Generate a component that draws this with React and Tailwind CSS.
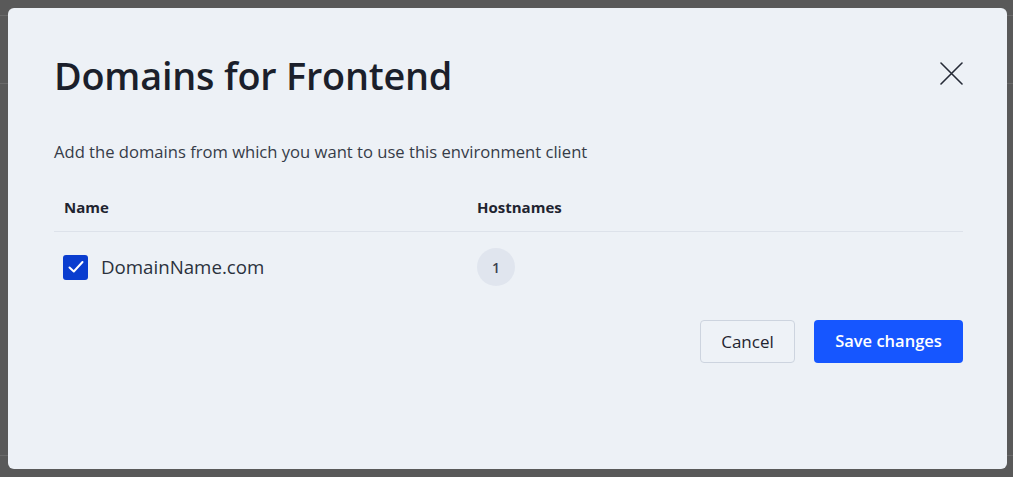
import React from 'react';

const font = { fontFamily: '"Open Sans", "Noto Sans", sans-serif' };

const CloseIcon = () => (
    <svg width="23" height="23" viewBox="0 0 23 23" fill="none" stroke="#252a36" strokeWidth="1.6" strokeLinecap="round">
        <path d="M1 1L22 22M22 1L1 22" />
    </svg>
);

const Check = () => (
    <svg width="18" height="18" viewBox="0 0 18 18" fill="none" stroke="#ffffff" strokeWidth="2" strokeLinecap="round" strokeLinejoin="round">
        <path d="M2.5 9.5L6.8 13.5L15.5 4" />
    </svg>
);

const App = () => {
    return (
        <div className="relative h-[477px] w-[1013px] overflow-hidden bg-[#595959]" style={font}>
            {/* page behind the overlay */}
            <div className="flex flex-col">
                <div className="h-[16px] border-b border-[#6a6a6a]" />
                <div className="h-[68px] border-b border-[#6a6a6a]" />
                <div className="h-[372px] border-b border-[#6a6a6a]" />
            </div>

            {/* Modal */}
            <div className="absolute inset-0 p-2">
                <div className="flex h-[461px] w-[999px] flex-col rounded-md bg-[#edf1f6] pt-[40px] pr-[44px] pl-[46px]">
                    <div className="flex items-start justify-between">
                        <h1 className="text-[37.8px] leading-[56px] font-semibold tracking-[-0.2px] text-[#1b1f2b]">Domains for Frontend</h1>
                        <button className="mt-[14px]" aria-label="Close">
                            <CloseIcon />
                        </button>
                    </div>

                    <p className="mt-[37px] text-[16.6px] leading-[22px] text-[#363c48]">
                        Add the domains from which you want to use this environment client
                    </p>

                    {/* Table */}
                    <div className="mt-[34px]">
                        <div className="grid grid-cols-[413px_1fr] border-b border-[#dde2ea] pb-[14px]">
                            <div className="pl-[10px] text-[15px] leading-[20px] font-bold text-[#1f2430]">Name</div>
                            <div className="pl-[10px] text-[15px] leading-[20px] font-bold text-[#1f2430]">Hostnames</div>
                        </div>
                        <div className="grid grid-cols-[413px_1fr] items-center pt-[16px]">
                            <div className="flex items-center gap-[13px] pl-[9px]">
                                <span className="flex h-[25px] w-[25px] items-center justify-center rounded-[3px] bg-[#0a3dcf]">
                                    <Check />
                                </span>
                                <span className="text-[18.7px] leading-[24px] text-[#2b313d]">DomainName.com</span>
                            </div>
                            <div className="pl-[10px]">
                                <span className="flex h-[38px] w-[38px] items-center justify-center rounded-full bg-[#e0e5ee] text-[14px] font-semibold text-[#3a4150]">1</span>
                            </div>
                        </div>
                    </div>

                    <div className="mt-[34px] flex justify-end gap-[19px]">
                        <button className="h-[43px] w-[95px] rounded-[4px] border border-[#cdd4df] bg-[#eef2f7] text-[17px] text-[#1f2430]">
                            Cancel
                        </button>
                        <button className="h-[43px] w-[149px] rounded-[4px] bg-[#1656ff] text-[16.5px] font-semibold text-white">
                            Save changes
                        </button>
                    </div>
                </div>
            </div>
        </div>
    );
};

export default App;
